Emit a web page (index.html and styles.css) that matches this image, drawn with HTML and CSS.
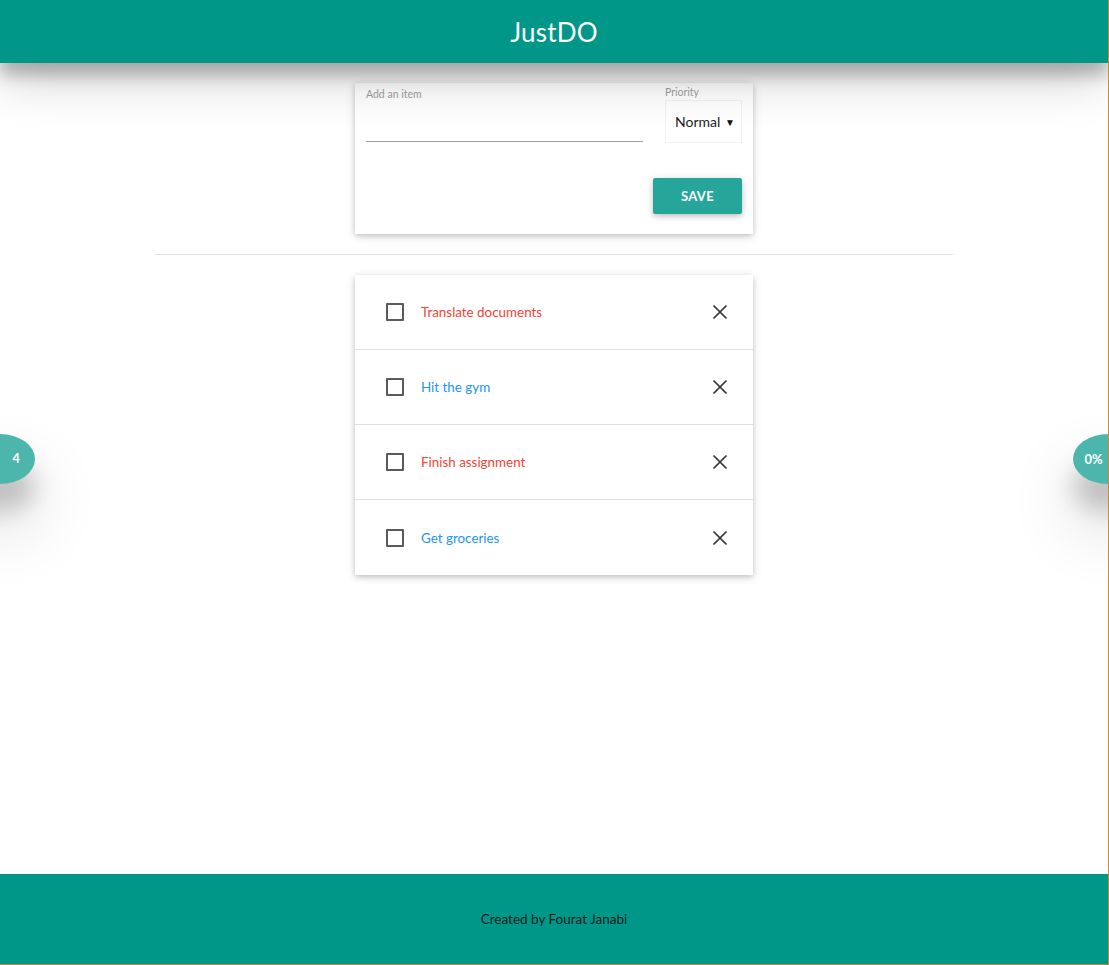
FILE: index.html
```html
<!DOCTYPE html>
<html lang="en">
<head>
<meta charset="utf-8">
<title>JustDO</title>
<link rel="stylesheet" href="styles.css">
</head>
<body>
<div class="page">
  <header class="topbar">
    <h1 class="brand">JustDO</h1>
  </header>

  <main class="main">
    <section class="card form-card">
      <div class="form-row">
        <div class="field field-item">
          <label class="field-label">Add an item</label>
          <div class="text-input"></div>
        </div>
        <div class="field field-priority">
          <label class="field-label">Priority</label>
          <div class="select-box"><span>Normal</span><span class="caret">▼</span></div>
        </div>
      </div>
      <div class="actions">
        <button class="btn-save">SAVE</button>
      </div>
    </section>

    <hr class="divider">

    <ul class="card todo-list">
      <li class="todo">
        <span class="checkbox"></span>
        <span class="todo-text red">Translate documents</span>
        <svg class="close" width="16" height="16" viewBox="0 0 16 16"><path d="M1.5 1.5 L14.5 14.5 M14.5 1.5 L1.5 14.5"/></svg>
      </li>
      <li class="todo">
        <span class="checkbox"></span>
        <span class="todo-text blue">Hit the gym</span>
        <svg class="close" width="16" height="16" viewBox="0 0 16 16"><path d="M1.5 1.5 L14.5 14.5 M14.5 1.5 L1.5 14.5"/></svg>
      </li>
      <li class="todo">
        <span class="checkbox"></span>
        <span class="todo-text red">Finish assignment</span>
        <svg class="close" width="16" height="16" viewBox="0 0 16 16"><path d="M1.5 1.5 L14.5 14.5 M14.5 1.5 L1.5 14.5"/></svg>
      </li>
      <li class="todo">
        <span class="checkbox"></span>
        <span class="todo-text blue">Get groceries</span>
        <svg class="close" width="16" height="16" viewBox="0 0 16 16"><path d="M1.5 1.5 L14.5 14.5 M14.5 1.5 L1.5 14.5"/></svg>
      </li>
    </ul>
  </main>

  <div class="bubble bubble-left"><span>4</span></div>
  <div class="bubble bubble-right"><span>0%</span></div>

  <footer class="footer">
    <p>Created by Fourat Janabi</p>
  </footer>
</div>
</body>
</html>
```

FILE: styles.css
```css
* { box-sizing: border-box; }

html, body {
  margin: 0;
  padding: 0;
  background: #fff;
}

body {
  font-family: Lato, "Open Sans", "Liberation Sans", sans-serif;
  color: #333;
}

.page {
  position: relative;
  min-height: 100vh;
  display: flex;
  flex-direction: column;
  border-right: 1px solid #c98a3c;
  border-bottom: 1px solid #b9893e;
  overflow: hidden;
}

.topbar {
  position: relative;
  z-index: 5;
  height: 63px;
  background: #009688;
  display: flex;
  align-items: center;
  justify-content: center;
  box-shadow: 0 12px 15px 0 rgba(0,0,0,0.24), 0 17px 50px 0 rgba(0,0,0,0.19);
}

.brand {
  margin: 0;
  color: #fff;
  font-weight: 400;
  font-size: 26px;
  letter-spacing: 0.2px;
  line-height: 1;
}

.main {
  flex: 1;
  display: flex;
  flex-direction: column;
  align-items: center;
  padding-top: 20px;
}

.card {
  width: 398px;
  background: #fff;
  box-shadow: 0 2px 5px 0 rgba(0,0,0,0.16), 0 2px 10px 0 rgba(0,0,0,0.12);
}

.form-card {
  padding: 4px 11px 20px 11px;
}

.form-row {
  display: flex;
  gap: 22px;
  align-items: flex-start;
}

.field-item { flex: 1; }
.field-priority { width: 77px; }

.field-label {
  display: block;
  font-size: 10.5px;
  line-height: 14px;
  color: #9e9e9e;
}

.field-priority .field-label {
  margin-top: -2px;
  margin-bottom: 1px;
}

.text-input {
  height: 41px;
  border-bottom: 1px solid #9e9e9e;
}

.select-box {
  height: 43px;
  display: flex;
  align-items: center;
  justify-content: space-between;
  padding: 0 6px 0 9px;
  border: 1px solid #f2f2f2;
  font-size: 14px;
  color: #222;
}

.caret {
  font-size: 10px;
  color: #111;
}

.actions {
  display: flex;
  justify-content: flex-end;
  margin-top: 35px;
}

.btn-save {
  width: 89px;
  height: 36px;
  border: none;
  border-radius: 2px;
  background: #26a69a;
  color: #fff;
  font-family: inherit;
  font-size: 13px;
  font-weight: 700;
  letter-spacing: 0.3px;
  box-shadow: 0 2px 5px 0 rgba(0,0,0,0.16), 0 2px 10px 0 rgba(0,0,0,0.12);
}

.divider {
  width: 798px;
  margin: 20px 0 20px 0;
  border: none;
  border-top: 1px solid #e0e0e0;
  height: 0;
}

.todo-list {
  list-style: none;
  margin: 0;
  padding: 0;
}

.todo {
  height: 75px;
  display: flex;
  align-items: center;
  padding: 0 25px 0 31px;
  border-bottom: 1px solid #e0e0e0;
}

.todo:last-child { border-bottom: none; }

.checkbox {
  width: 18px;
  height: 18px;
  border: 2px solid #5a5a5a;
  border-radius: 1px;
  flex-shrink: 0;
}

.todo-text {
  flex: 1;
  margin-left: 17px;
  font-size: 13.4px;
}

.red { color: #f44336; }
.blue { color: #2196f3; }

.close path {
  stroke: #333;
  stroke-width: 1.7;
  fill: none;
}

.bubble {
  position: absolute;
  top: 45%;
  width: 70px;
  height: 50px;
  border-radius: 50%;
  background: #4db6ac;
  color: #fff;
  font-size: 12.5px;
  font-weight: 700;
  display: flex;
  align-items: center;
  box-shadow: 0 27px 24px 0 rgba(0,0,0,0.2), 0 40px 70px 0 rgba(0,0,0,0.2);
  z-index: 3;
}

.bubble span {
  width: 35px;
  text-align: center;
}

.bubble-left {
  left: -35px;
  justify-content: flex-end;
}

.bubble-left span { padding-right: 3px; }

.bubble-right {
  right: -35px;
  justify-content: flex-start;
}

.bubble-right span { padding-left: 6px; font-size: 13px; }

.footer {
  height: 90px;
  background: #009688;
  display: flex;
  align-items: center;
  justify-content: center;
}

.footer p {
  margin: 0;
  font-size: 13.5px;
  color: rgba(0,0,0,0.82);
}
```
